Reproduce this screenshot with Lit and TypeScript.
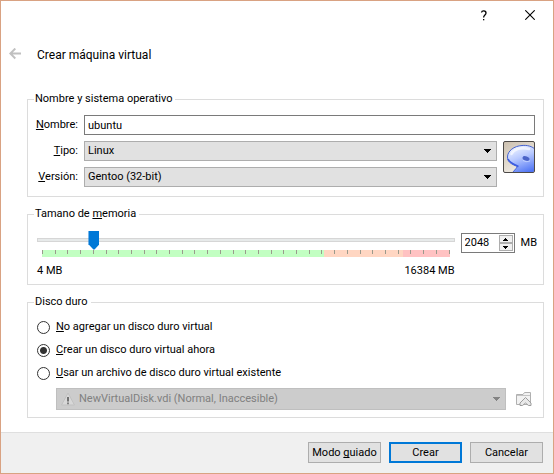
import { LitElement, html, css } from "lit";
import { customElement, state } from "lit/decorators.js";

const MIN_MB = 4;
const MAX_MB = 16384;
const TICKS = Array.from({ length: 33 }, (_, i) => i);

const arrow = html`<svg class="arrow" viewBox="0 0 7 4" width="7" height="4" aria-hidden="true" shape-rendering="crispEdges">
  <path d="M0 0h7v1H6v1H5v1H4v1H3V3H2V2H1V1H0z" fill="currentColor" />
</svg>`;

@customElement("app-root")
export class AppRoot extends LitElement {
  @state() private memory = 2048;
  @state() private disk = "create";

  static styles = css`
    :host {
      display: flex;
      flex-direction: column;
      box-sizing: border-box;
      min-height: 100vh;
      border: 1px solid #d9a282;
      background: #fff;
      color: #000;
      font: 11px/16px Roboto, "Noto Sans", sans-serif;
    }
    * {
      box-sizing: border-box;
    }
    button,
    input,
    select {
      font: inherit;
      color: inherit;
      margin: 0;
      border-radius: 0;
      outline: none;
    }
    svg {
      display: block;
    }
    u {
      text-underline-offset: 1px;
      text-decoration-skip-ink: none;
    }
    .titlebar {
      display: flex;
      justify-content: flex-end;
      gap: 20px;
      padding: 1px 10px 0;
    }
    .flat {
      display: grid;
      place-items: center;
      padding: 0;
      border: 0;
      background: none;
    }
    .caption {
      width: 26px;
      height: 26px;
    }
    .heading {
      display: flex;
      align-items: center;
      gap: 16px;
      padding: 15px 8px 0;
    }
    h1 {
      margin: 0;
      font: 12px/24px Roboto, "Noto Sans", sans-serif;
    }
    main {
      display: flex;
      flex-direction: column;
      gap: 9px;
      padding: 24px 9px 13px 26px;
    }
    fieldset {
      min-width: 0;
      margin: 0;
      padding: 0 6px 0 8px;
      border: 1px solid #dcdcdc;
    }
    legend {
      margin-left: -2px;
      padding: 0 3px 0 1px;
    }
    .system {
      display: grid;
      grid-template-columns: 42px 1fr 32px;
      gap: 6px;
      align-items: center;
      padding: 8px 2px 9px 0;
    }
    .system label {
      justify-self: end;
    }
    .name {
      grid-column: 2 / 4;
      width: 100%;
      height: 20px;
      padding: 0 3px;
      border: 1px solid #7a7a7a;
      background: #fff;
    }
    .system .combo {
      grid-column: 2;
    }
    .os {
      grid-column: 3;
      grid-row: 2 / 4;
      align-self: start;
    }
    .combo {
      position: relative;
      min-width: 0;
    }
    .combo select {
      display: block;
      appearance: none;
      width: 100%;
      height: 20px;
      padding: 0 18px 0 3px;
      border: 1px solid #adadad;
      background: #e1e1e1;
    }
    .combo .arrow {
      position: absolute;
      right: 6px;
      top: 8px;
    }
    .memory {
      display: grid;
      grid-template-columns: 1fr auto auto;
      column-gap: 6px;
      align-items: start;
      padding: 8px 0 5px 1px;
    }
    .range {
      display: block;
      appearance: none;
      width: 100%;
      height: 19px;
      background: none;
    }
    .range::-webkit-slider-runnable-track {
      height: 4px;
      border: 1px solid #d6d6d6;
      background: #e7eaea;
    }
    .range::-webkit-slider-thumb {
      appearance: none;
      width: 11px;
      height: 19px;
      margin-top: -8px;
      background: #0078d7;
      clip-path: polygon(0 0, 100% 0, 100% 72%, 55% 100%, 45% 100%, 0 72%);
    }
    .scale {
      display: flex;
      justify-content: space-between;
      height: 7px;
      margin: 1px 5px 0;
      background: linear-gradient(90deg, #c2ffc2 69%, #ffd6c2 69% 88.5%, #ffc2c2 88.5%);
    }
    .tick {
      width: 1px;
      height: 4px;
      background: #9a9a8c;
    }
    .limits {
      display: flex;
      justify-content: space-between;
      margin-top: 6px;
    }
    .spin {
      display: flex;
      width: 54px;
      height: 20px;
      margin-top: 3px;
      padding: 1px;
      border: 1px solid #7a7a7a;
    }
    .spin input {
      appearance: textfield;
      flex: 1;
      min-width: 0;
      padding: 0 2px;
      border: 0;
      background: none;
    }
    .spin input::-webkit-inner-spin-button {
      display: none;
    }
    .steps {
      display: grid;
      grid-template-rows: 8px 8px;
      width: 14px;
    }
    .step {
      display: grid;
      place-items: center;
      padding: 0;
      border: 1px solid #adadad;
      background: #f0f0f0;
    }
    .unit {
      margin-top: 5px;
    }
    .disks {
      display: flex;
      flex-direction: column;
      gap: 7px;
      padding: 9px 5px 7px 1px;
    }
    .choice {
      display: flex;
      align-items: center;
      gap: 6px;
    }
    .choice input {
      appearance: none;
      width: 13px;
      height: 13px;
      border: 1px solid #333;
      border-radius: 50%;
      background: #fff;
    }
    .choice input:checked {
      background: radial-gradient(circle, #333 0 3px, #fff 4px);
    }
    .file {
      display: grid;
      grid-template-columns: 1fr 18px;
      column-gap: 8px;
      align-items: center;
      padding-left: 19px;
    }
    .file select {
      height: 22px;
      padding-left: 22px;
      border-color: #bfbfbf;
      background: #ccc;
      color: #808080;
      opacity: 1;
    }
    .file .combo {
      color: #838383;
    }
    .file .arrow {
      top: 9px;
    }
    .warn {
      position: absolute;
      left: 5px;
      top: 4px;
    }
    footer {
      display: flex;
      flex-wrap: wrap;
      justify-content: flex-end;
      gap: 8px;
      margin-top: auto;
      padding: 9px 10px 10px;
      border-top: 1px solid #dfdfdf;
      background: #f0f0f0;
    }
    .push {
      min-width: 73px;
      height: 21px;
      padding: 1px 3px 0;
      border: 1px solid #adadad;
      background: #e1e1e1;
    }
    .push.default {
      border: 2px solid #0078d7;
    }
  `;

  private setMemory(value: number) {
    this.memory = Math.min(MAX_MB, Math.max(MIN_MB, value));
  }

  private onMemory(e: Event) {
    this.setMemory(Number((e.target as HTMLInputElement).value));
  }

  private choice(id: string, key: string, rest: string) {
    return html`<label class="choice">
      <input type="radio" name="disk" .checked=${this.disk === id} @change=${() => (this.disk = id)} />
      <span><u>${key}</u>${rest}</span>
    </label>`;
  }

  private osIcon() {
    return html`<svg class="os" viewBox="0 0 32 32" width="32" height="32" role="img" aria-label="Gentoo">
      <defs>
        <linearGradient id="sand" x1="0" y1="0" x2="0.6" y2="1">
          <stop offset="0" stop-color="#cbbfae" />
          <stop offset="1" stop-color="#f3efe8" />
        </linearGradient>
        <linearGradient id="blue" x1="0.2" y1="0" x2="0.6" y2="1">
          <stop offset="0" stop-color="#f4f8ff" />
          <stop offset="0.45" stop-color="#b8c9ff" />
          <stop offset="1" stop-color="#4f74f4" />
        </linearGradient>
        <clipPath id="frame"><rect x="1" y="1" width="30" height="30" rx="1" /></clipPath>
      </defs>
      <rect x="0.5" y="0.5" width="31" height="31" rx="1.5" fill="url(#sand)" />
      <g clip-path="url(#frame)">
        <path d="M33 9C29 5 24 4 19 4.500C11 5 4.500 10 4.500 16C4.500 21 8 23 14.500 25.500C13 28 10.500 30 8.500 33H33Z" fill="url(#blue)" stroke="#4562cf" stroke-width="1" />
        <path d="M5 18C7 22 10 23 15.500 25.500" fill="none" stroke="#3c5be0" stroke-width="1.600" />
        <path d="M8.500 13C11 8 18 6 26 8" fill="none" stroke="#fff" stroke-width="2.500" stroke-linecap="round" opacity="0.600" />
        <ellipse cx="23" cy="17.500" rx="3.600" ry="2.200" transform="rotate(20 23 17.500)" fill="#4a63c8" />
        <path d="M20 19.500Q23 21.500 27 20" fill="none" stroke="#dfe7ff" stroke-width="0.600" />
      </g>
      <rect x="0.5" y="0.5" width="31" height="31" rx="1.5" fill="none" stroke="#4d4a48" />
    </svg>`;
  }

  render() {
    return html`
      <div class="titlebar">
        <button class="flat caption" aria-label="Ayuda">
          <svg viewBox="0 0 8 11" width="8" height="11">
            <path d="M1.500 2.500C1.800 .4 6 .3 6 3C6 5 3.600 4.900 3.600 7.500" fill="none" stroke="#000" stroke-width="1.300" />
            <rect x="3" y="9" width="1.300" height="1.300" />
          </svg>
        </button>
        <button class="flat caption" aria-label="Cerrar">
          <svg viewBox="0 0 10 10" width="10" height="10">
            <path d="M.3 .3L9.700 9.700M9.700 .3L.3 9.700" stroke="#000" stroke-width="1.100" />
          </svg>
        </button>
      </div>
      <header class="heading">
        <button class="flat" aria-label="Atrás" disabled>
          <svg viewBox="0 0 12 14" width="12" height="14">
            <path d="M12 5.500H1.500M6.300 .500L1.300 5.500L6.300 10.500" fill="none" stroke="#c0c0c0" stroke-width="1.900" />
          </svg>
        </button>
        <h1>Crear máquina virtual</h1>
      </header>

      <main>
        <fieldset>
          <legend>Nombre y sistema operativo</legend>
          <div class="system">
            <label for="name"><u>N</u>ombre:</label>
            <input id="name" class="name" type="text" value="ubuntu" />
            <label for="type"><u>T</u>ipo:</label>
            <div class="combo">
              <select id="type"><option>Linux</option></select>${arrow}
            </div>
            <label for="version"><u>V</u>ersión:</label>
            <div class="combo">
              <select id="version"><option>Gentoo (32-bit)</option></select>${arrow}
            </div>
            ${this.osIcon()}
          </div>
        </fieldset>

        <fieldset>
          <legend>Tamano de <u>m</u>emoria</legend>
          <div class="memory">
            <div>
              <input class="range" type="range" aria-label="Tamano de memoria" min=${MIN_MB} max=${MAX_MB} .value=${String(this.memory)} @input=${this.onMemory} />
              <div class="scale">${TICKS.map(() => html`<span class="tick"></span>`)}</div>
              <div class="limits"><span>${MIN_MB} MB</span><span>${MAX_MB} MB</span></div>
            </div>
            <div class="spin">
              <input id="mb" type="number" min=${MIN_MB} max=${MAX_MB} .value=${String(this.memory)} @change=${this.onMemory} />
              <div class="steps">
                <button class="step" aria-label="Más" @click=${() => this.setMemory(this.memory + 1)}>
                  <svg viewBox="0 0 5 3" width="5" height="3" shape-rendering="crispEdges"><path d="M2 0h1v1h1v1h1v1H0V2h1V1h1z" /></svg>
                </button>
                <button class="step" aria-label="Menos" @click=${() => this.setMemory(this.memory - 1)}>
                  <svg viewBox="0 0 5 3" width="5" height="3" shape-rendering="crispEdges"><path d="M0 0h5v1H4v1H3v1H2V2H1V1H0z" /></svg>
                </button>
              </div>
            </div>
            <label class="unit" for="mb">MB</label>
          </div>
        </fieldset>

        <fieldset>
          <legend>Disco duro</legend>
          <div class="disks">
            ${this.choice("none", "N", "o agregar un disco duro virtual")}
            ${this.choice("create", "C", "rear un disco duro virtual ahora")}
            ${this.choice("existing", "U", "sar un archivo de disco duro virtual existente")}
            <div class="file">
              <div class="combo">
                <select aria-label="Archivo de disco" ?disabled=${this.disk !== "existing"}>
                  <option>NewVirtualDisk.vdi (Normal, Inaccesible)</option>
                </select>
                <svg class="warn" viewBox="0 0 14 14" width="14" height="14" aria-hidden="true">
                  <path d="M7 1L13.500 13H.5Z" fill="#d8d8d8" stroke="#c0c0c0" />
                  <path d="M7 5V9.500" stroke="#666" stroke-width="1.800" />
                  <path d="M7 10.500V12.300" stroke="#777" stroke-width="1.800" />
                </svg>
                ${arrow}
              </div>
              <button class="flat" aria-label="Elegir archivo" ?disabled=${this.disk !== "existing"}>
                <svg viewBox="0 0 17 16" width="17" height="16">
                  <path d="M1.500 13.500V3.500H8L9.500 1.500H15.500V13.500Z" fill="#f2f2f2" stroke="#b0b0b0" />
                  <path d="M2 4.500H15" stroke="#c4c4c4" />
                  <path d="M10.500 6.500L16 12V14.500H13.500L10.500 12L7.500 14.500H5V12Z" fill="#e9e9e9" stroke="#9c9c9c" />
                </svg>
              </button>
            </div>
          </div>
        </fieldset>
      </main>

      <footer>
        <button class="push">Modo <u>g</u>uiado</button>
        <button class="push default">Crear</button>
        <button class="push">Cancelar</button>
      </footer>
    `;
  }
}
